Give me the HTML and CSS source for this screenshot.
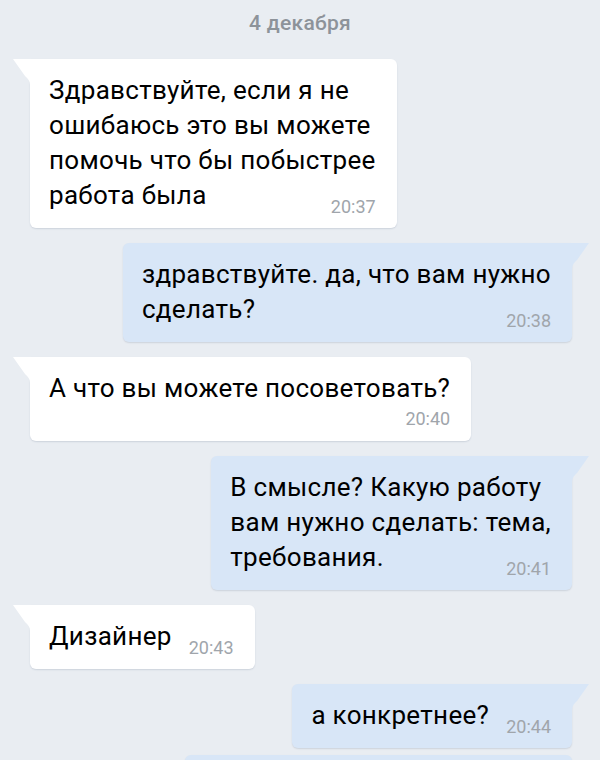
FILE: index.html
```html
<!DOCTYPE html>
<html lang="ru">
<head>
<meta charset="utf-8">
<title>Сообщения</title>
<link rel="stylesheet" href="styles.css">
</head>
<body>
<main class="chat">
  <div class="day">4 декабря</div>

  <div class="msg in">Здравствуйте, если я не<br>ошибаюсь это вы можете<br>помочь что бы побыстрее<br>работа была<span class="time">20:37</span></div>

  <div class="msg out">здравствуйте. да, что вам нужно<br>сделать?<span class="time">20:38</span></div>

  <div class="msg in stacked">А что вы можете посоветовать?<span class="time">20:40</span></div>

  <div class="msg out">В смысле? Какую работу<br>вам нужно сделать: тема,<br>требования.<span class="time">20:41</span></div>

  <div class="msg in">Дизайнер<span class="time">20:43</span></div>

  <div class="msg out">а конкретнее?<span class="time">20:44</span></div>

  <div class="msg out follow" aria-hidden="true"></div>
</main>
</body>
</html>
```

FILE: styles.css
```css
html,
body {
  margin: 0;
  height: 100%;
  overflow: hidden;
  background: #e9edf2;
}

.chat {
  display: flex;
  flex-direction: column;
  gap: 15px;
  padding: 11px 28px 0 30px;
  font-family: Roboto, "Noto Sans", "Liberation Sans", sans-serif;
}

/* date separator */
.day {
  align-self: center;
  margin: 0 2px 9px 0;
  font-size: 21px;
  line-height: 24px;
  letter-spacing: 0.3px;
  font-weight: 500;
  color: #8d939a;
}

/* message bubble */
.msg {
  position: relative;
  padding: 14px 21px 12px 19px;
  border-radius: 6px;
  font-size: 26px;
  line-height: 35px;
  letter-spacing: 0.3px;
  color: #000;
  box-shadow: 0 1px 1.5px rgba(60, 80, 110, 0.16);
}

.msg.in {
  align-self: flex-start;
  background: #fff;
  border-top-left-radius: 0;
}

.msg.out {
  align-self: flex-end;
  background: #d8e6f7;
  border-top-right-radius: 0;
}

/* bubble tails */
.msg::before {
  content: "";
  position: absolute;
  top: 0;
  width: 18px;
  height: 26px;
}

.msg.in::before {
  left: -17px;
  background: #fff;
  clip-path: path("M0 0 H18 V26 H17 C17 22 15 19.5 12 17 Z");
}

.msg.out::before {
  right: -17px;
  background: #d8e6f7;
  clip-path: path("M18 0 H0 V26 H1 C1 22 3 19.5 6 17 Z");
}

/* timestamp sits at the bottom right of the last line */
.time {
  float: right;
  margin: 20px 0 0 17px;
  font-size: 18px;
  line-height: 18px;
  letter-spacing: 0;
  color: #a0a5ab;
}

.msg.stacked {
  padding-bottom: 13px;
}

.msg.stacked .time {
  float: none;
  display: block;
  margin: 4px 0 0;
  text-align: right;
}

/* next bubble from the same sender, no tail */
.msg.follow {
  width: 387px;
  height: 64px;
  padding: 0;
  margin-top: -8px;
  border-top-right-radius: 6px;
}

.msg.follow::before {
  display: none;
}
```
